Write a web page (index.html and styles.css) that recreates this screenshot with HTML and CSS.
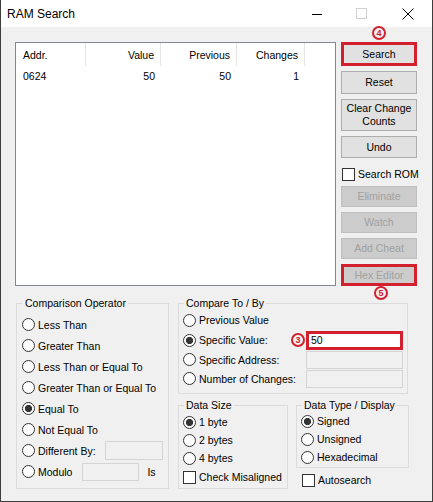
FILE: index.html
```html
<!DOCTYPE html>
<html>
<head>
<meta charset="utf-8">
<title>RAM Search</title>
<link rel="stylesheet" href="styles.css">
</head>
<body>
<div class="window">
  <div class="titlebar">
    <span class="title">RAM Search</span>
    <div class="controls">
      <span class="ctl"><svg width="10" height="10" viewBox="0 0 10 10"><path d="M0 5.5H10" stroke="#000" stroke-width="1"/></svg></span>
      <span class="ctl"><svg width="11" height="11" viewBox="0 0 11 11"><rect x="0.5" y="0.5" width="10" height="10" fill="none" stroke="#cfcfcf"/></svg></span>
      <span class="ctl"><svg width="12" height="12" viewBox="0 0 12 12"><path d="M0.5 0.5L11.5 11.5M11.5 0.5L0.5 11.5" stroke="#000" stroke-width="1"/></svg></span>
    </div>
  </div>
  <div class="client">
    <div class="top">
      <div class="list">
        <div class="lv-row lv-head">
          <div class="c">Addr.</div>
          <div class="c num">Value</div>
          <div class="c num">Previous</div>
          <div class="c num">Changes</div>
        </div>
        <div class="lv-row lv-data">
          <div class="c">0624</div>
          <div class="c num">50</div>
          <div class="c num">50</div>
          <div class="c num">1</div>
        </div>
      </div>
      <div class="buttons">
        <div class="btn red h24">Search</div>
        <div class="btn h23">Reset</div>
        <div class="btn h32">Clear Change<br>Counts</div>
        <div class="btn h22">Undo</div>
        <div class="check btncheck"><span class="cb"></span>Search ROM</div>
        <div class="btn dis h21">Eliminate</div>
        <div class="btn dis h21">Watch</div>
        <div class="btn dis h21">Add Cheat</div>
        <div class="btn dis red h22">Hex Editor</div>
      </div>
    </div>
    <div class="bottom">
      <fieldset class="group cmp-op">
        <legend>Comparison Operator</legend>
        <div class="radio r21"><span class="rb"></span>Less Than</div>
        <div class="radio r21"><span class="rb"></span>Greater Than</div>
        <div class="radio r21"><span class="rb"></span>Less Than or Equal To</div>
        <div class="radio r21"><span class="rb"></span>Greater Than or Equal To</div>
        <div class="radio r21"><span class="rb on"></span>Equal To</div>
        <div class="radio r21"><span class="rb"></span>Not Equal To</div>
        <div class="radio r21"><span class="rb"></span>Different By:<span class="tb diff"></span></div>
        <div class="radio r21"><span class="rb"></span>Modulo<span class="tb mod"></span><span class="is">Is</span></div>
      </fieldset>
      <div class="right-col">
        <fieldset class="group cmp-to">
          <legend>Compare To / By</legend>
          <div class="radio r20"><span class="rb"></span>Previous Value</div>
          <div class="radio r20"><span class="rb on"></span>Specific Value:<span class="tb val red-tb">50</span></div>
          <div class="radio r19"><span class="rb"></span>Specific Address:<span class="tb val"></span></div>
          <div class="radio r19"><span class="rb"></span>Number of Changes:<span class="tb val"></span></div>
        </fieldset>
        <div class="lower">
          <fieldset class="group dsize">
            <legend>Data Size</legend>
            <div class="radio r18"><span class="rb on"></span>1 byte</div>
            <div class="radio r18"><span class="rb"></span>2 bytes</div>
            <div class="radio r18"><span class="rb"></span>4 bytes</div>
            <div class="check r18 cm"><span class="cb"></span>Check Misaligned</div>
          </fieldset>
          <div class="dtype-col">
            <fieldset class="group dtype">
              <legend>Data Type / Display</legend>
              <div class="radio r18"><span class="rb on"></span>Signed</div>
              <div class="radio r18"><span class="rb"></span>Unsigned</div>
              <div class="radio r18"><span class="rb"></span>Hexadecimal</div>
            </fieldset>
            <div class="check r18 autos"><span class="cb"></span>Autosearch</div>
          </div>
        </div>
      </div>
    </div>
  </div>
  <span class="badge b4">4</span>
  <span class="badge b5">5</span>
  <span class="badge b3">3</span>
</div>
</body>
</html>
```

FILE: styles.css
```css
body {
  margin: 0;
  font-family: "Liberation Sans", Arial, sans-serif;
  font-size: 10.5px;
  color: #000;
  background: #fff;
}

.window {
  position: relative;
  width: 433px;
  height: 502px;
  box-sizing: border-box;
  border: 1px solid #3d3d3d;
  border-top: none;
  background: #f0f0f0;
  display: flex;
  flex-direction: column;
  overflow: hidden;
  white-space: nowrap;
}

.titlebar {
  height: 27px;
  flex: none;
  background: #fff;
  display: flex;
  align-items: center;
  padding-left: 6px;
}

.title {
  font-size: 12px;
}

.controls {
  margin-left: auto;
  display: flex;
  height: 100%;
}

.ctl {
  width: 45px;
  display: flex;
  align-items: center;
  justify-content: center;
}

.ctl:last-child {
  width: 48px;
}

.client {
  flex: 1;
  padding: 15px 0 0 14px;
}

.top {
  display: flex;
  gap: 5px;
}

.list {
  width: 321px;
  height: 244px;
  box-sizing: border-box;
  border: 1px solid #828790;
  background: #fff;
}

.lv-row {
  display: grid;
  grid-template-columns: 70px 75px 76px 68px;
}

.lv-head {
  height: 23px;
}

.lv-head .c {
  border-right: 1px solid #e5e5e5;
}

.lv-data {
  height: 20px;
}

.c {
  display: flex;
  align-items: center;
  padding: 0 6px 0 7px;
}

.num {
  justify-content: flex-end;
}

.buttons {
  width: 76px;
  display: flex;
  flex-direction: column;
  gap: 5px;
}

.btn {
  box-sizing: border-box;
  border: 1px solid #adadad;
  background: #e1e1e1;
  display: flex;
  align-items: center;
  justify-content: center;
  text-align: center;
  line-height: 13px;
}

.btn.dis {
  background: #cccccc;
  border-color: #bfbfbf;
  color: #a0a0a0;
}

.btn.red {
  border: 3px solid #d3202f;
}

.h24 { height: 24px; }
.h23 { height: 23px; }
.h32 { height: 32px; }
.h22 { height: 22px; }
.h21 { height: 21px; }

.check {
  display: flex;
  align-items: center;
  gap: 3px;
}

.btncheck {
  height: 18px;
  padding-top: 4px;
  box-sizing: border-box;
  padding-left: 1px;
}

.cb {
  width: 13px;
  height: 13px;
  box-sizing: border-box;
  border: 1px solid #333;
  background: #fff;
  flex: none;
}

.radio {
  display: flex;
  align-items: center;
  gap: 3px;
}

.rb {
  width: 13px;
  height: 13px;
  box-sizing: border-box;
  border: 1px solid #333;
  border-radius: 50%;
  background: #fff;
  flex: none;
}

.rb.on {
  background: radial-gradient(circle, #333 0 3.3px, #fff 3.9px);
}

.r21 { height: 21px; }
.r20 { height: 20px; }
.r19 { height: 19px; }
.r18 { height: 18px; }

.bottom {
  display: flex;
  gap: 9px;
  margin-top: 11px;
  padding-left: 1px;
}

.group {
  margin: 0;
  min-width: 0;
  border: 1px solid #dcdcdc;
  padding: 0 4px 0 4px;
  box-sizing: border-box;
}

.group legend {
  padding: 0 2px;
  margin-left: 1px;
  line-height: 13px;
}

.cmp-op {
  width: 153px;
  padding: 4px 5px 6px 5px;
}

.right-col {
  width: 231px;
}

.cmp-to {
  width: 230px;
  padding-bottom: 5px;
}

.tb {
  box-sizing: border-box;
  border: 1px solid #d4d4d4;
  background: #f0f0f0;
  flex: none;
}

.diff {
  width: 58px;
  height: 19px;
  margin-left: auto;
}

.mod {
  width: 57px;
  height: 18px;
  margin-left: 7px;
}

.is {
  margin-left: 5px;
}

.val {
  width: 97px;
  height: 18px;
  margin-left: auto;
}

.red-tb {
  height: 19px;
  border: 3px solid #d3202f;
  background: #fff;
  padding-left: 2px;
  display: flex;
  align-items: center;
}

.lower {
  display: flex;
  gap: 8px;
  margin-top: 5px;
}

.dsize {
  width: 110px;
  padding-top: 1px;
  padding-bottom: 2px;
}

.cm {
  height: 19px;
  padding-top: 1px;
  box-sizing: border-box;
}

.dtype-col {
  width: 113px;
}

.dtype {
  width: 113px;
  padding-bottom: 1px;
}

.autos {
  margin-top: 3px;
  padding-left: 6px;
}

.badge {
  position: absolute;
  width: 14px;
  height: 14px;
  box-sizing: border-box;
  border: 2px solid #d3202f;
  border-radius: 50%;
  color: #d3202f;
  font-weight: bold;
  font-size: 9px;
  line-height: 10px;
  text-align: center;
}

.b4 { left: 371px; top: 26px; }
.b5 { left: 373px; top: 286px; }
.b3 { left: 290px; top: 333px; }
```
